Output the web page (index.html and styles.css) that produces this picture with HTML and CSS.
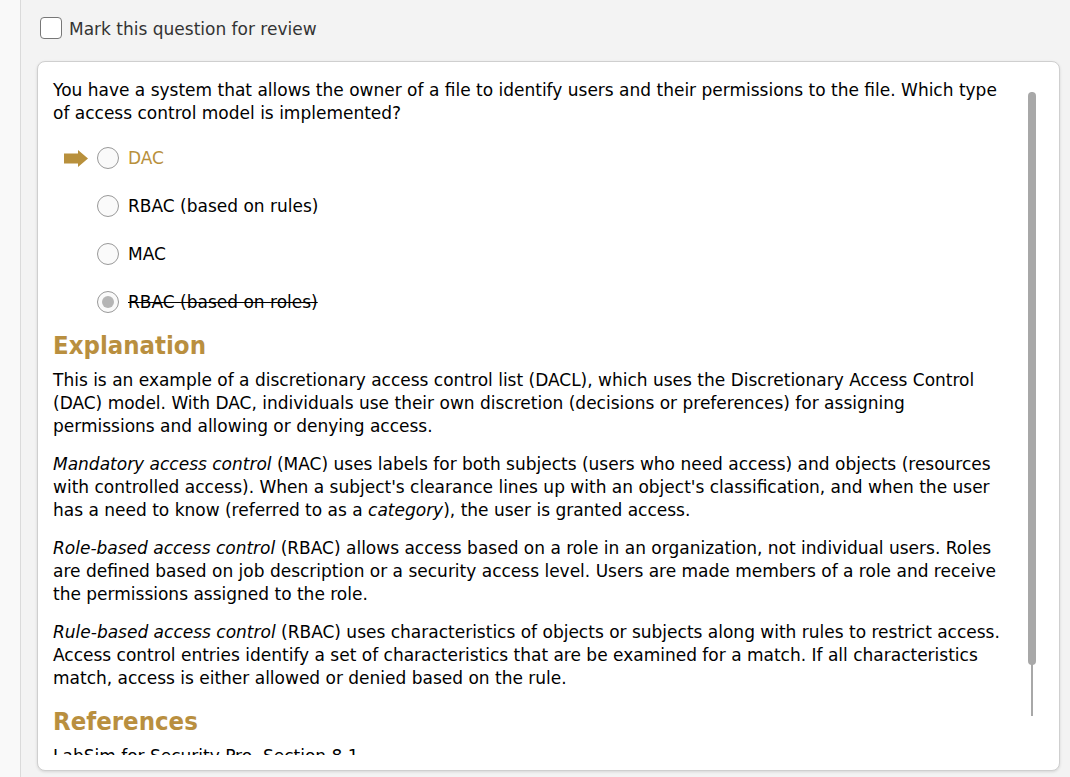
FILE: index.html
```html
<!DOCTYPE html>
<html>
<head>
<meta charset="utf-8">
<link rel="stylesheet" href="styles.css">
</head>
<body>
<div class="page">
  <div class="rail"></div>
  <div class="main">
    <label class="review">
      <span class="checkbox"></span>
      <span class="review-text">Mark this question for review</span>
    </label>
    <div class="card">
      <div class="scroll">
        <p class="question">You have a system that allows the owner of a file to identify users and their permissions to the file. Which type<br>of access control model is implemented?</p>
        <ul class="options">
          <li class="option correct">
            <svg class="arrow" width="24" height="17" viewBox="0 0 24 17"><path d="M0 3.5H14V0L24 8.5L14 17V13.5H0Z" fill="#b8903c"/></svg>
            <span class="radio"></span><span class="opt-text">DAC</span>
          </li>
          <li class="option"><span class="radio"></span><span class="opt-text">RBAC (based on rules)</span></li>
          <li class="option"><span class="radio"></span><span class="opt-text">MAC</span></li>
          <li class="option chosen"><span class="radio"><span class="dot"></span></span><span class="opt-text">RBAC (based on roles)</span></li>
        </ul>
        <h2 class="heading">Explanation</h2>
        <p class="para">This is an example of a discretionary access control list (DACL), which uses the Discretionary Access Control<br>(DAC) model. With DAC, individuals use their own discretion (decisions or preferences) for assigning<br>permissions and allowing or denying access.</p>
        <p class="para"><em>Mandatory access control</em> (MAC) uses labels for both subjects (users who need access) and objects (resources<br>with controlled access). When a subject's clearance lines up with an object's classification, and when the user<br>has a need to know (referred to as a <em>category</em>), the user is granted access.</p>
        <p class="para"><em>Role-based access control</em> (RBAC) allows access based on a role in an organization, not individual users. Roles<br>are defined based on job description or a security access level. Users are made members of a role and receive<br>the permissions assigned to the role.</p>
        <p class="para"><em>Rule-based access control</em> (RBAC) uses characteristics of objects or subjects along with rules to restrict access.<br>Access control entries identify a set of characteristics that are be examined for a match. If all characteristics<br>match, access is either allowed or denied based on the rule.</p>
        <h2 class="heading">References</h2>
        <p class="para">LabSim for Security Pro, Section 8.1</p>
      </div>
      <div class="scrollbar"><div class="thumb"></div></div>
    </div>
  </div>
</div>
</body>
</html>
```
FILE: styles.css
```css
html, body {
  margin: 0;
  padding: 0;
  background: #f3f3f3;
}
body {
  font-family: "DejaVu Sans", Verdana, sans-serif;
  font-size: 17px;
  color: #000;
}
.page {
  display: flex;
  height: 777px;
  overflow: hidden;
}
.rail {
  width: 20px;
  flex: none;
  background: #f9f9f9;
  border-right: 1px solid #dadada;
}
.main {
  flex: 1;
  padding: 0 10px 0 16px;
  display: flex;
  flex-direction: column;
}
.review {
  display: flex;
  align-items: center;
  height: 22px;
  margin: 17px 0 0 3px;
  gap: 7px;
}
.checkbox {
  width: 20px;
  height: 20px;
  border: 1px solid #777;
  border-radius: 4px;
  background: #fff;
}
.review-text {
  color: #333;
  position: relative;
  top: 1px;
}
.card {
  position: relative;
  box-sizing: border-box;
  margin-top: 22px;
  height: 710px;
  background: #fff;
  border: 1px solid #cfcfcf;
  border-radius: 8px;
  box-shadow: 0 1px 3px rgba(0,0,0,0.12);
  overflow: hidden;
}
.scroll {
  height: 693px;
  overflow: hidden;
  padding: 17px 0 0 15px;
  box-sizing: border-box;
}
.question {
  margin: 0;
  line-height: 23px;
}
.options {
  list-style: none;
  margin: 21px 0 0 0;
  padding: 0 0 0 44px;
}
.option {
  position: relative;
  display: flex;
  align-items: center;
  height: 24px;
  margin-bottom: 24px;
  gap: 9px;
}
.option:last-child {
  margin-bottom: 0;
}
.arrow {
  position: absolute;
  left: -33px;
  top: 4px;
}
.radio {
  width: 20px;
  height: 20px;
  border: 1px solid #999;
  border-radius: 50%;
  background: #fafafa;
  display: flex;
  align-items: center;
  justify-content: center;
  flex: none;
}
.dot {
  width: 12px;
  height: 12px;
  border-radius: 50%;
  background: #b5b5b5;
}
.correct .opt-text {
  color: #b8903c;
}
.chosen .opt-text {
  text-decoration: line-through;
}
.heading {
  margin: 16px 0 9px 0;
  font-size: 25.5px;
  font-weight: bold;
  color: #b98f3f;
  line-height: 30px;
  font-stretch: condensed;
}
.para {
  margin: 0 0 15px 0;
  line-height: 23px;
}
.scrollbar {
  position: absolute;
  right: 23px;
  top: 30px;
  width: 8px;
  height: 624px;
}
.scrollbar::before {
  content: "";
  position: absolute;
  left: 3px;
  top: 0;
  width: 2px;
  height: 100%;
  background: #a8a8a8;
}
.thumb {
  position: absolute;
  left: 0;
  top: 0;
  width: 8px;
  height: 573px;
  border-radius: 4px;
  background: #a8a8a8;
}
```
